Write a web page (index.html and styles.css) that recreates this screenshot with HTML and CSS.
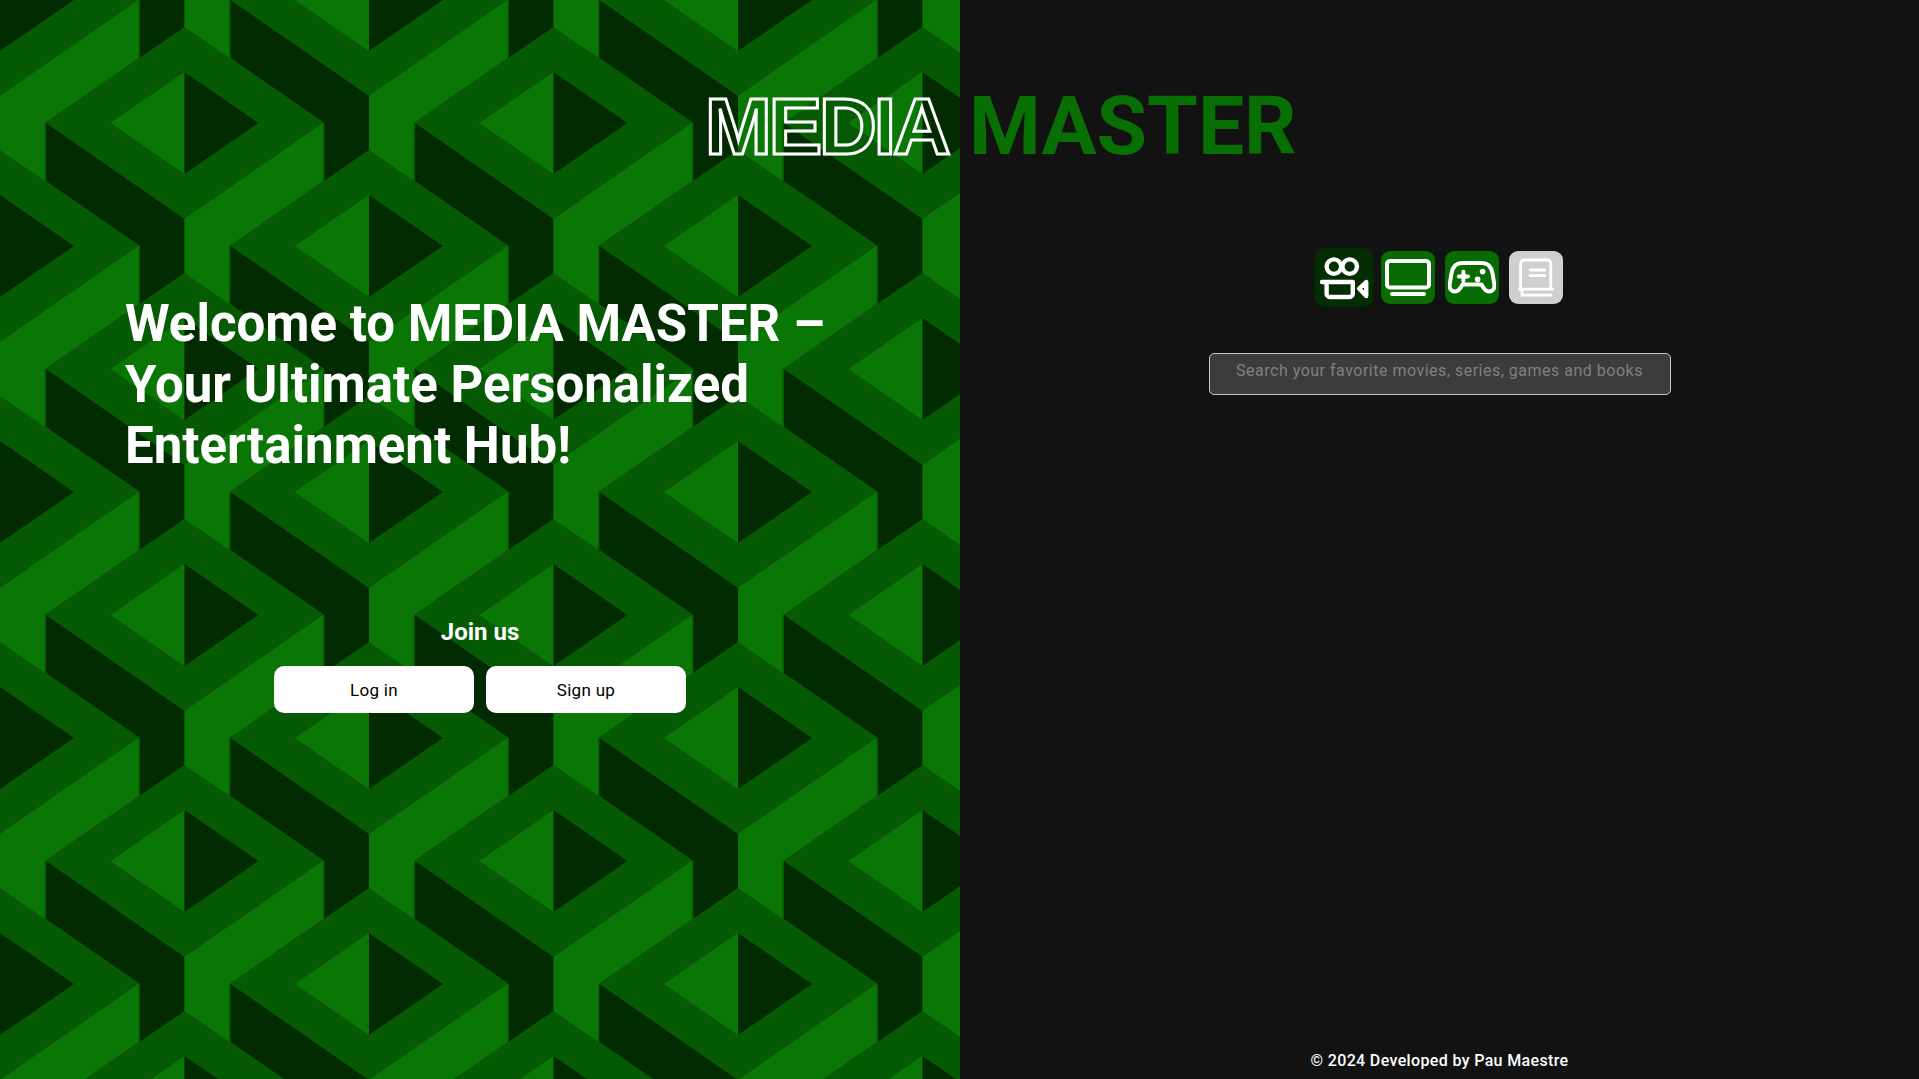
FILE: index.html
```html
<!DOCTYPE html>
<html lang="en">
<head>
<meta charset="utf-8">
<title>Media Master</title>
<link rel="stylesheet" href="styles.css">
</head>
<body>
<div class="logo"><span class="logo-outline">MEDIA</span> <span class="logo-solid">MASTER</span></div>
<main class="page">
  <section class="welcome">
    <h1 class="welcome-title">Welcome to MEDIA MASTER – Your Ultimate Personalized Entertainment Hub!</h1>
    <h2 class="join-title">Join us</h2>
    <div class="join-buttons">
      <button class="btn">Log in</button>
      <button class="btn">Sign up</button>
    </div>
  </section>
  <section class="browse">
    <nav class="media-tabs">
      <button class="tab tab-movies">
        <svg class="icon" viewBox="0 0 24 24"><circle cx="7.4" cy="6.8" r="3.3"/><circle cx="14.6" cy="6.8" r="3.3"/><path d="M2 13.8h14M4.1 13.8v5.3a1.5 1.5 0 0 0 1.5 1.5h8.9a1.5 1.5 0 0 0 1.5-1.5v-5.3M18.9 16.8l3.2-3v6.4z"/></svg>
      </button>
      <button class="tab tab-green">
        <svg class="icon" viewBox="0 0 24 24"><rect x="1.5" y="3.5" width="21" height="13.2" rx="1.5"/><path d="M4 20h16"/></svg>
      </button>
      <button class="tab tab-green">
        <svg class="icon" viewBox="0 0 24 24"><path d="M7 4.5h10c3 0 4.6 2 5.2 5l1 5.7c.3 2-1 3.6-2.6 3.6-1.4 0-2.2-1-2.9-2l-1-1.6H7.3l-1 1.6c-.7 1-1.5 2-2.9 2-1.6 0-2.9-1.6-2.6-3.6l1-5.7c.6-3 2.2-5 5.2-5z"/><path d="M7.7 8.9v4.6M5.4 11.2H10"/><path class="dot" d="M17.3 8.8h.01M14.8 12.7h.01"/></svg>
      </button>
      <button class="tab tab-grey">
        <svg class="icon icon-thin" viewBox="0 0 24 24"><path d="M4.3 17.6V4.8a1.8 1.8 0 0 1 1.8-1.8h11.5a1.8 1.8 0 0 1 1.8 1.8v12.8M3.8 17.6h16.5M5 17.6v3h14.5M9 8h7.5M9 10.8h7.5"/></svg>
      </button>
    </nav>
    <input class="search" type="text" placeholder="Search your favorite movies, series, games and books">
    <footer class="credit">© 2024 Developed by Pau Maestre</footer>
  </section>
</main>
</body>
</html>
```
FILE: styles.css
```css
* { box-sizing: border-box; }
html, body { margin: 0; height: 100%; overflow: hidden; }
body { font-family: Roboto, "Noto Sans", sans-serif; background: #121212; color: #fff; position: relative; }

.page { display: flex; height: 1079px; }

.welcome {
  width: 960px;
  display: flex;
  flex-direction: column;
  align-items: center;
  padding-top: 293px;
  background-color: #055a03;
  background-size: 369px 246px;
  background-image: url("data:image/svg+xml,%3Csvg xmlns='http://www.w3.org/2000/svg' width='369' height='246' viewBox='0 0 369 246'%3E%3Crect width='369' height='246' fill='%23055a03'/%3E%3Cdefs%3E%3Cg id='u'%3E%3Cpolygon fill='%23055a03' points='46,123 184.5,27 323,123 184.5,219'/%3E%3Cpolygon fill='%230a7606' points='110.5,123 184.5,72 184.5,174'/%3E%3Cpolygon fill='%23032b02' points='258.5,123 184.5,72 184.5,174'/%3E%3Cpolygon fill='%23032b02' points='46,123 184.5,219 184.5,273 140,303.5 140,246 46,181'/%3E%3Cpolygon fill='%230a7606' points='323,123 184.5,219 184.5,273 229,303.5 229,246 323,181'/%3E%3C/g%3E%3C/defs%3E%3Cuse href='%23u'/%3E%3Cuse href='%23u' x='184.5' y='123'/%3E%3Cuse href='%23u' x='-184.5' y='123'/%3E%3Cuse href='%23u' x='184.5' y='-123'/%3E%3Cuse href='%23u' x='-184.5' y='-123'/%3E%3Cuse href='%23u' y='-246'/%3E%3C/svg%3E");
}

.logo {
  position: absolute;
  left: 705px;
  top: 71px;
  display: flex;
  align-items: baseline;
  gap: 16px;
  line-height: 110px;
  white-space: nowrap;
}
.logo-outline { width: 248px; color: transparent; -webkit-text-stroke: 3px #fff; font-family: "Liberation Sans", sans-serif; font-size: 80px; font-weight: 700; letter-spacing: -3px; }
.logo-solid { color: #087003; font-size: 82px; font-weight: 700; }

.welcome-title {
  width: 740px;
  margin: 0 0 0 125px;
  align-self: flex-start;
  font-size: 51px;
  line-height: 61px;
  font-weight: 700;
}
.join-title {
  margin: 141px 0 0;
  font-size: 24px;
  line-height: 30px;
  font-weight: 700;
}
.join-buttons { display: flex; gap: 12px; margin-top: 19px; }
.btn {
  width: 200px;
  height: 47px;
  border: 0;
  border-radius: 10px;
  background: #fff;
  color: #000;
  font: 400 17px Roboto, sans-serif;
  letter-spacing: .3px;
}

.browse {
  flex: 1;
  display: flex;
  flex-direction: column;
  align-items: center;
  padding-top: 251px;
  background: #121212;
}
.media-tabs { display: flex; gap: 10px; }
.tab {
  width: 54px;
  height: 53px;
  padding: 0;
  border: 0;
  border-radius: 9px;
  display: flex;
  align-items: center;
  justify-content: center;
}
.tab-movies { background: #032e02; transform: scale(1.1); }
.tab-green { background: #086c02; }
.tab-grey { background: #cfcfcf; }
.icon { width: 48px; height: 48px; fill: none; stroke: #fff; stroke-width: 2; stroke-linecap: round; stroke-linejoin: round; }
.icon-thin { stroke-width: 1.4; }
.dot { stroke-width: 2.8; }

.search {
  width: 462px;
  height: 42px;
  margin-top: 49px;
  padding: 0 10px 8px;
  border: 1px solid #c8c8c8;
  border-radius: 5px;
  background: #3c3c3c;
  color: #fff;
  text-align: center;
  font: 400 16px Roboto, sans-serif;
  letter-spacing: .5px;
}
.search::placeholder { color: #808080; opacity: 1; }

.credit {
  margin-top: auto;
  padding-bottom: 9px;
  font-size: 16px;
  line-height: 18px;
  font-weight: 500;
  letter-spacing: .35px;
}
```
